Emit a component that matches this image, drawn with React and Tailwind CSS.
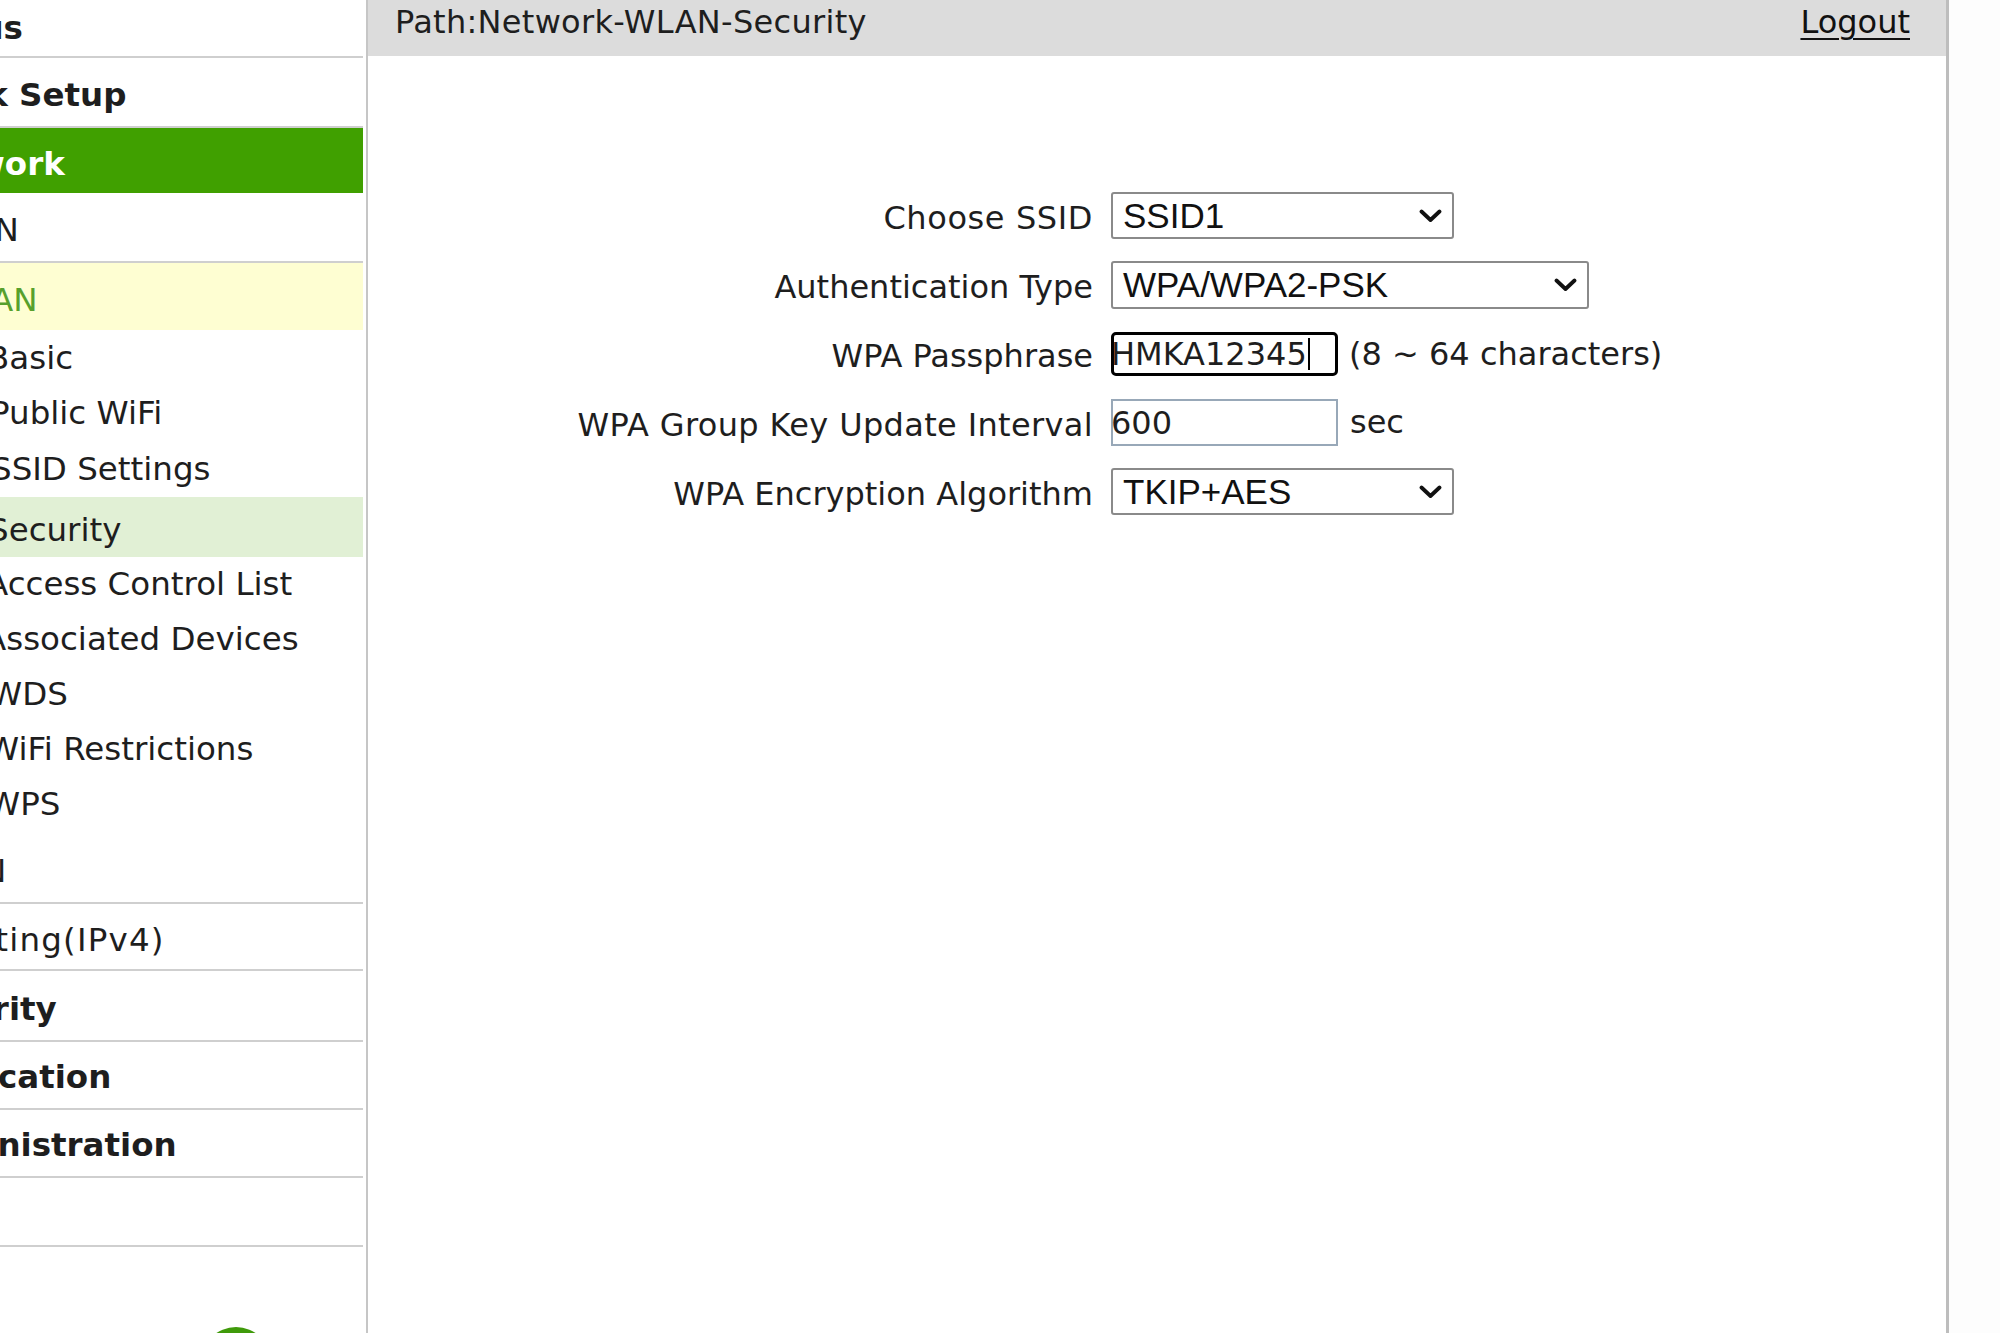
import React from 'react';

const sep = 'border-b-2 border-[#cfcfcf]';

const menu = [
  { label: 'Status', row: `h-[58px] ${sep}`, text: 'font-bold -ml-[96px]' },
  { label: 'Quick Setup', row: `h-[70px] ${sep} pt-[7px]`, text: 'font-bold -ml-[95px]' },
  { label: 'Network', row: 'h-[65px] bg-[#40a000] text-white pt-[7px]', text: 'font-bold -ml-[90px]' },
  { label: 'WAN', row: `h-[70px] ${sep} pt-[7px]`, text: '-ml-[58px]' },
  { label: 'WLAN', row: 'h-[67px] bg-[#fefed2] text-[#57a02c] pt-[7px]', text: '-ml-[60px]' },
  { label: 'Basic', row: 'h-[55px] pt-[1px]', text: '-ml-[13px]' },
  { label: 'Public WiFi', row: 'h-[55px] pt-[1px]', text: '-ml-[10px]' },
  { label: 'SSID Settings', row: 'h-[57px] pt-[1px]', text: '-ml-[9px]' },
  { label: 'Security', row: 'h-[60px] bg-[#e1f0d5] pt-[7px]', text: '-ml-[12px]' },
  { label: 'Access Control List', row: 'h-[54px] pt-[1px]', text: '-ml-[14px]' },
  { label: 'Associated Devices', row: 'h-[55px] pt-[1px]', text: '-ml-[16px]' },
  { label: 'WDS', row: 'h-[55px] pt-[1px]', text: '-ml-[10px]' },
  { label: 'WiFi Restrictions', row: 'h-[55px] pt-[1px]', text: '-ml-[13px]' },
  { label: 'WPS', row: 'h-[56px] pt-[1px]', text: '-ml-[12px]' },
  { label: 'LAN', row: `h-[72px] ${sep} pt-[8px]`, text: '-ml-[59px]' },
  { label: 'Routing(IPv4)', row: `h-[67px] ${sep} pt-[7px]`, text: '-ml-[70px] tracking-[1.2px]' },
  { label: 'Security', row: `h-[71px] ${sep} pt-[7px]`, text: 'font-bold -ml-[95px]' },
  { label: 'Application', row: `h-[68px] ${sep} pt-[5px]`, text: 'font-bold -ml-[96px]' },
  { label: 'Administration', row: `h-[68px] ${sep} pt-[5px]`, text: 'font-bold -ml-[96px]' },
  { label: 'Help', row: `h-[69px] ${sep}`, text: 'font-bold -ml-[140px]' },
];

function Chevron() {
  return (
    <svg width="23" height="14" viewBox="0 0 23 14" fill="none">
      <polyline points="2.5,2.5 11.5,11 20.5,2.5" stroke="#111" strokeWidth="3.8" strokeLinecap="round" strokeLinejoin="round" />
    </svg>
  );
}

function Select({ value, width, height }) {
  return (
    <div className={`${width} ${height} flex items-center justify-between rounded-[3px] border-2 border-[#8a8a8a] bg-white pl-[10px] pr-[10px] font-['Liberation_Sans',Arial,sans-serif] text-[35px] leading-none text-[#111]`}>
      <span>{value}</span>
      <Chevron />
    </div>
  );
}

function Row({ label, children, labelClass = '' }) {
  return (
    <div className="flex h-[69px] items-center gap-[18px]">
      <div className={`w-[725px] pt-[5px] text-right ${labelClass}`}>{label}</div>
      <div className="flex items-center">{children}</div>
    </div>
  );
}

export default function App() {
  return (
    <div className="flex h-[1333px] w-full overflow-hidden bg-white font-['DejaVu_Sans',Verdana,sans-serif] text-[#1e1e1e]">
      <aside className="h-full w-[368px] shrink-0 overflow-hidden border-r-2 border-[#c6c6c6] pr-[3px] text-[32.5px]">
        {menu.map((item, i) => (
          <div key={i} className={`flex items-center overflow-hidden whitespace-nowrap ${item.row}`}>
            <span className={item.text}>{item.label}</span>
          </div>
        ))}
        <div className="ml-[201px] mt-[80px] h-[70px] w-[70px] rounded-full bg-[#3f9a0a]" />
      </aside>

      <main className="flex h-full w-[1581px] shrink-0 flex-col border-r-[3px] border-[#bdbdbd] text-[32px]">
        <div className="flex h-[56px] shrink-0 justify-between bg-[#dcdcdc] pl-[27px] pr-[36px] pt-[2px] leading-[40px]">
          <span className="tracking-[0.3px]">Path:Network-WLAN-Security</span>
          <a href="#" className="text-[#111] underline decoration-2 underline-offset-[5px]">Logout</a>
        </div>

        <div className="mt-[125px] flex flex-col">
          <Row label="Choose SSID" labelClass="tracking-[0.6px]">
            <Select value="SSID1" width="w-[343px]" height="h-[47px]" />
          </Row>
          <Row label="Authentication Type">
            <Select value="WPA/WPA2-PSK" width="w-[478px]" height="h-[48px]" />
          </Row>
          <Row label="WPA Passphrase">
            <div className="flex h-[44px] w-[227px] items-center rounded-[5px] border-[3px] border-black bg-white leading-none">
              <span className="-ml-[3px]">HMKA12345</span>
              <span className="ml-[1px] h-[32px] w-[2px] bg-black" />
            </div>
            <span className="ml-[11px]">(8 ~ 64 characters)</span>
          </Row>
          <Row label="WPA Group Key Update Interval" labelClass="tracking-[0.35px]">
            <div className="flex h-[47px] w-[227px] items-center border-2 border-[#98a8b8] bg-white leading-none">
              <span className="-ml-[2px]">600</span>
            </div>
            <span className="ml-[12px] -mt-[2px]">sec</span>
          </Row>
          <Row label="WPA Encryption Algorithm">
            <Select value="TKIP+AES" width="w-[343px]" height="h-[47px]" />
          </Row>
        </div>
      </main>

      <div className="h-full flex-1 bg-[#fdfdfd]" />
    </div>
  );
}
